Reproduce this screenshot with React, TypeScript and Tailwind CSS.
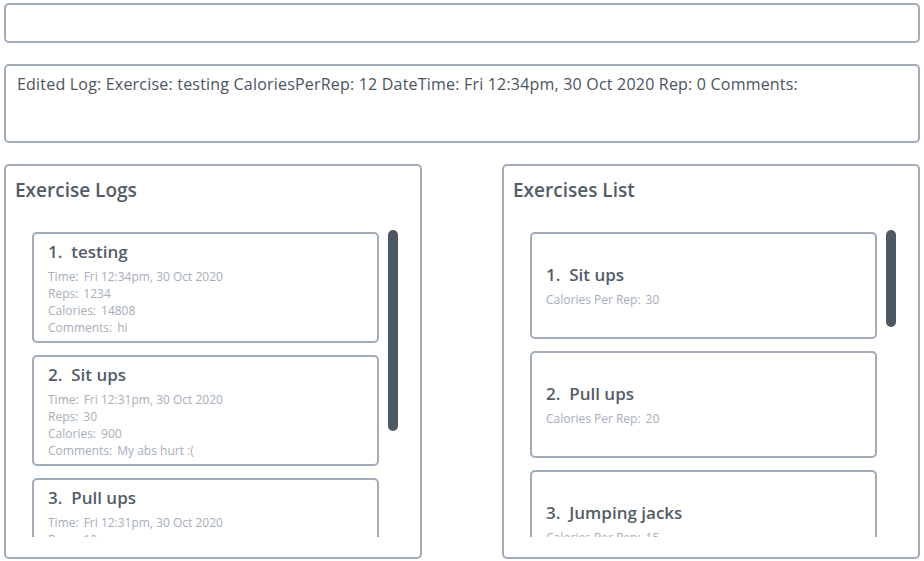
const LOGS = [
  {
    name: "testing",
    rows: [
      ["Time:", "Fri 12:34pm, 30 Oct 2020"],
      ["Reps:", "1234"],
      ["Calories:", "14808"],
      ["Comments:", "hi"],
    ],
  },
  {
    name: "Sit ups",
    rows: [
      ["Time:", "Fri 12:31pm, 30 Oct 2020"],
      ["Reps:", "30"],
      ["Calories:", "900"],
      ["Comments:", "My abs hurt :("],
    ],
  },
  {
    name: "Pull ups",
    rows: [
      ["Time:", "Fri 12:31pm, 30 Oct 2020"],
      ["Reps:", "10"],
      ["Calories:", "200"],
      ["Comments:", "-"],
    ],
  },
];

const EXERCISES = [
  { name: "Sit ups", cal: "30" },
  { name: "Pull ups", cal: "20" },
  { name: "Jumping jacks", cal: "15" },
];

const FONT = { fontFamily: '"Open Sans", "Noto Sans", sans-serif' };

function Detail({ label, value }: { label: string; value: string }) {
  return (
    <div className="h-[17px] leading-[17px] text-[12px] text-[#a6aeb9] whitespace-nowrap">
      <span className="mr-[5px]">{label}</span>
      <span>{value}</span>
    </div>
  );
}

function Panel({
  title,
  thumb,
  children,
}: {
  title: string;
  thumb: number;
  children: React.ReactNode;
}) {
  return (
    <section className="w-[418px] h-[395px] border-2 border-[#a2acb9] rounded-[5px] bg-white px-[9px]">
      <h2 className="pt-[10px] leading-[28px] text-[19px] font-semibold text-[#535d67]">
        {title}
      </h2>
      <div className="mt-[26px] h-[307px] flex">
        <div className="ml-[17px] w-[347px] h-full overflow-hidden pt-[2px] flex flex-col gap-[12px]">
          {children}
        </div>
        <div className="ml-[9px] w-[10px]">
          <div
            className="w-[10px] rounded-full bg-[#4d5863]"
            style={{ height: thumb }}
          />
        </div>
      </div>
    </section>
  );
}

export default function App() {
  return (
    <div className="w-[924px] h-[561px] bg-white pt-[3px] px-[4px] text-[#4b5461]" style={FONT}>
      <div className="h-[40px] border-2 border-[#a2acb9] rounded-[5px]" />

      <div className="mt-[21px] h-[79px] border-2 border-[#a2acb9] rounded-[5px] px-[11px] pt-[7px]">
        <p className="text-[16px] leading-[22px] tracking-[0.2px] text-[#4b5461] whitespace-nowrap">
          Edited Log: Exercise: testing CaloriesPerRep: 12 DateTime: Fri 12:34pm, 30 Oct 2020 Rep: 0 Comments:
        </p>
      </div>

      <div className="mt-[21px] flex justify-between">
        <Panel title="Exercise Logs" thumb={201}>
          {LOGS.map((log, i) => (
            <div
              key={log.name}
              className="shrink-0 h-[111px] border-2 border-[#a2acb9] rounded-[5px] px-[14px] pt-[6px]"
            >
              <div className="text-[17px] leading-[24px] font-semibold text-[#535d67] whitespace-pre">
                {`${i + 1}.  ${log.name}`}
              </div>
              <div className="mt-[4px]">
                {log.rows.map(([l, v]) => (
                  <Detail key={l} label={l} value={v} />
                ))}
              </div>
            </div>
          ))}
        </Panel>

        <Panel title="Exercises List" thumb={97}>
          {EXERCISES.map((ex, i) => (
            <div
              key={ex.name}
              className="shrink-0 h-[107px] border-2 border-[#a2acb9] rounded-[5px] px-[14px] flex flex-col justify-center"
            >
              <div className="text-[17px] leading-[24px] font-semibold text-[#535d67] whitespace-pre">
                {`${i + 1}.  ${ex.name}`}
              </div>
              <div className="mt-[4px]">
                <Detail label="Calories Per Rep:" value={ex.cal} />
              </div>
            </div>
          ))}
        </Panel>
      </div>
    </div>
  );
}
